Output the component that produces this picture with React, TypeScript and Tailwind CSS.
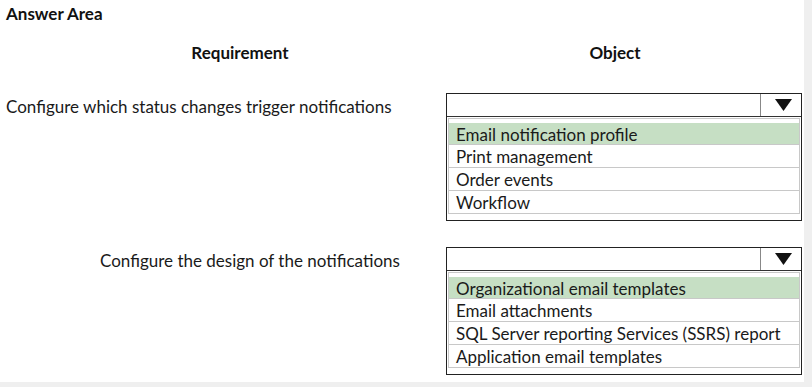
const font = { fontFamily: '"Lato", "Open Sans", sans-serif' };

type DropdownProps = { options: string[] };

const Dropdown = ({ options }: DropdownProps) => {
  return (
    <div className="w-[356px] border border-[#222] bg-white">
      <div className="h-[23px] flex border-b border-[#333]">
        <div className="flex-1" />
        <div className="w-[41px] border-l border-[#888] flex items-center justify-center pl-[4px]">
          <svg width="17" height="12" viewBox="0 0 17 12">
            <polygon points="0,0 17,0 8.5,12" fill="#111" />
          </svg>
        </div>
      </div>
      <div className="mx-[1px] mt-[1px] mb-[6px] border border-[#c8c8c8] pt-[4px]">
        {options.map((opt, i) => (
          <div
            key={opt}
            className={
              i === 0
                ? 'h-[21px] bg-[#c6dfc4] flex items-center pl-[7px] pt-[2px] text-[17px] leading-none text-[#1a1a1a]'
                : 'h-[23px] border-t border-[#c8c8c8] flex items-center pl-[7px] pt-[1px] text-[17px] leading-none text-[#1a1a1a]'
            }
          >
            {opt}
          </div>
        ))}
      </div>
    </div>
  );
}

export default function App() {
  return (
    <div className="w-[812px] h-[387px] bg-[#efefef]" style={font}>
      <div className="w-[804px] h-[382px] bg-white flex flex-col">
        <div className="pl-[6px] pt-[3px] h-[40px] text-[17px] leading-[22px] font-bold text-[#111]">Answer Area</div>

        <div className="flex h-[24px] items-center text-[17px] leading-none font-bold text-[#111]">
          <div className="w-[480px] text-center">Requirement</div>
          <div className="w-[270px] text-center">Object</div>
        </div>

        <div className="flex mt-[29px]">
          <div className="w-[446px] h-[24px] flex items-center pl-[6px] pt-[3px] text-[17px] text-[#1a1a1a]">
            Configure which status changes trigger notifications
          </div>
          <Dropdown
            options={['Email notification profile', 'Print management', 'Order events', 'Workflow']}
          />
        </div>

        <div className="flex mt-[26px]">
          <div className="w-[446px] h-[24px] flex items-center pl-[100px] pt-[3px] text-[17px] text-[#1a1a1a]">
            Configure the design of the notifications
          </div>
          <Dropdown
            options={[
              'Organizational email templates',
              'Email attachments',
              'SQL Server reporting Services (SSRS) report',
              'Application email templates',
            ]}
          />
        </div>
      </div>
    </div>
  );
}
